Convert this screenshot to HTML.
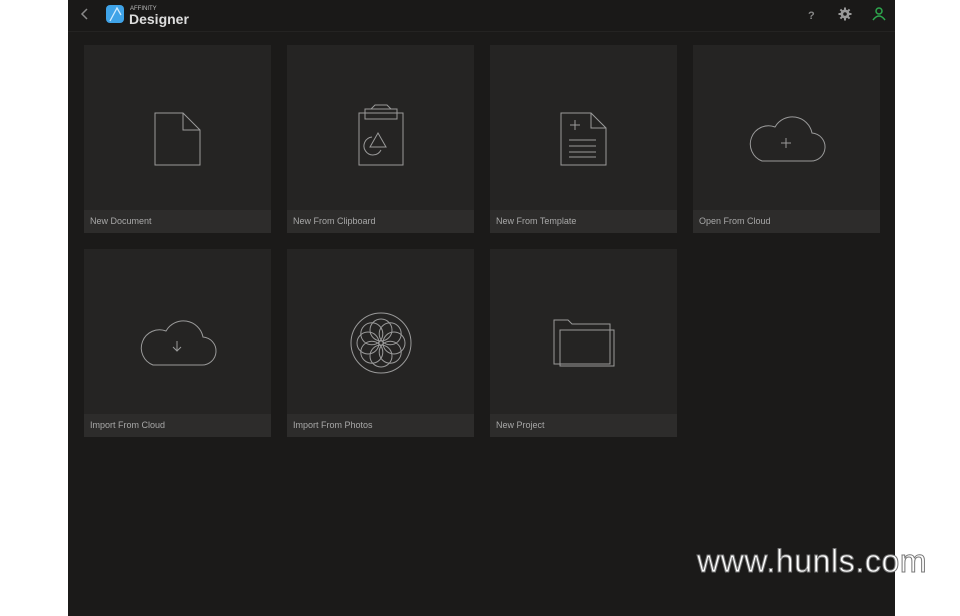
<!DOCTYPE html>
<html><head><style>
body{margin:0;width:960px;height:616px;background:#fff;position:relative;overflow:hidden;font-family:"Liberation Sans",sans-serif}
.app{position:absolute;left:68px;top:0;width:827px;height:616px;background:#1b1a19}
.hdr{position:absolute;left:0;top:0;width:827px;height:31px;background:#1a1918;border-bottom:1px solid #242322}
.card{position:absolute;width:187px;height:188px;background:#252423}
.card .lb{position:absolute;left:0;bottom:0;width:100%;height:23px;background:#2d2c2b;color:#a8a8a8;font-size:9px;line-height:23px;padding-left:6px;box-sizing:border-box}
.card svg{position:absolute;left:0;top:0}
svg .s{fill:none;stroke:#9a9a9a;stroke-width:1}
.wm{position:absolute;left:697px;top:543px;font-size:32px;color:#fff;-webkit-text-stroke:1px #777;letter-spacing:0.6px;white-space:nowrap}
</style></head><body>
<div class="app">
<div class="hdr">
<svg width="827" height="31" style="position:absolute;left:0;top:0">
<path d="M19 9 L14 14 L19 19" fill="none" stroke="#888" stroke-width="1.5"/>
<rect x="38" y="5" width="18" height="18" rx="4" fill="#3fa3e8"/>
<path d="M42 21 L49 8 L53 15" fill="none" stroke="#cfeaff" stroke-width="1.3"/>
<text x="62" y="10" font-size="6" fill="#bbb" font-family="Liberation Sans">AFFINITY</text>
<text x="61" y="24" font-size="14" font-weight="bold" fill="#ddd" font-family="Liberation Sans">Designer</text>
<text x="740" y="19" font-size="11" font-weight="bold" fill="#888" font-family="Liberation Sans">?</text>
<circle cx="777" cy="14" r="4.5" fill="#999"/>
<path d="M777 7.5v13M770.5 14h13M772.4 9.4l9.2 9.2M781.6 9.4l-9.2 9.2" stroke="#999" stroke-width="2"/>
<circle cx="777" cy="14" r="1.8" fill="#1a1918"/>
<circle cx="811" cy="11" r="3" fill="none" stroke="#2ea84e" stroke-width="1.5"/>
<path d="M805 20 Q811 12 817 20" fill="none" stroke="#2ea84e" stroke-width="1.5"/>
</svg>
</div>
</div>
<div class="card" style="left:84px;top:45px"><svg width="187" height="165"><path class="s" d="M71 68H99L116 85V120H71Z M99 68V85H116"/></svg><div class="lb">New Document</div></div>
<div class="card" style="left:287px;top:45px"><svg width="187" height="165"><path class="s" d="M72 68V120H116V68Z M78 64H110V74H78Z M84 64L88 60H100L104 64 M91 88L99 102H83Z M85 92A9 9 0 1 0 94 105"/></svg><div class="lb">New From Clipboard</div></div>
<div class="card" style="left:490px;top:45px"><svg width="187" height="165"><path class="s" d="M71 68H101L116 83V120H71Z M101 68V83H116 M85 75V85M80 80H90 M79 95H106M79 101H106M79 107H106M79 112H106"/></svg><div class="lb">New From Template</div></div>
<div class="card" style="left:693px;top:45px"><svg width="187" height="165"><path class="s" d="M69 116H117A14 14 0 0 0 119 88A20 20 0 0 0 82 82A16 16 0 0 0 69 116Z M93 93V103M88 98H98"/></svg><div class="lb">Open From Cloud</div></div>
<div class="card" style="left:84px;top:249px"><svg width="187" height="165"><path class="s" d="M69 116H117A14 14 0 0 0 119 88A20 20 0 0 0 82 82A16 16 0 0 0 69 116Z M93 92V102M89 98L93 102L97 98"/></svg><div class="lb">Import From Cloud</div></div>
<div class="card" style="left:287px;top:249px"><svg width="187" height="165"><g class="s"><ellipse cx="94" cy="94" rx="30" ry="30"/>
<g transform="translate(94 94)"><circle cx="0" cy="-13" r="11"/><circle cx="0" cy="13" r="11"/><circle cx="-13" cy="0" r="11"/><circle cx="13" cy="0" r="11"/><circle cx="9.2" cy="9.2" r="11"/><circle cx="-9.2" cy="9.2" r="11"/><circle cx="9.2" cy="-9.2" r="11"/><circle cx="-9.2" cy="-9.2" r="11"/></g></g></svg><div class="lb">Import From Photos</div></div>
<div class="card" style="left:490px;top:249px"><svg width="187" height="165"><path class="s" d="M64 71H78L82 75H120V115H64Z M70 81V117H124V81Z" fill="#252423"/></svg><div class="lb">New Project</div></div>
<div class="wm">www.hunls.com</div>
</body></html>
